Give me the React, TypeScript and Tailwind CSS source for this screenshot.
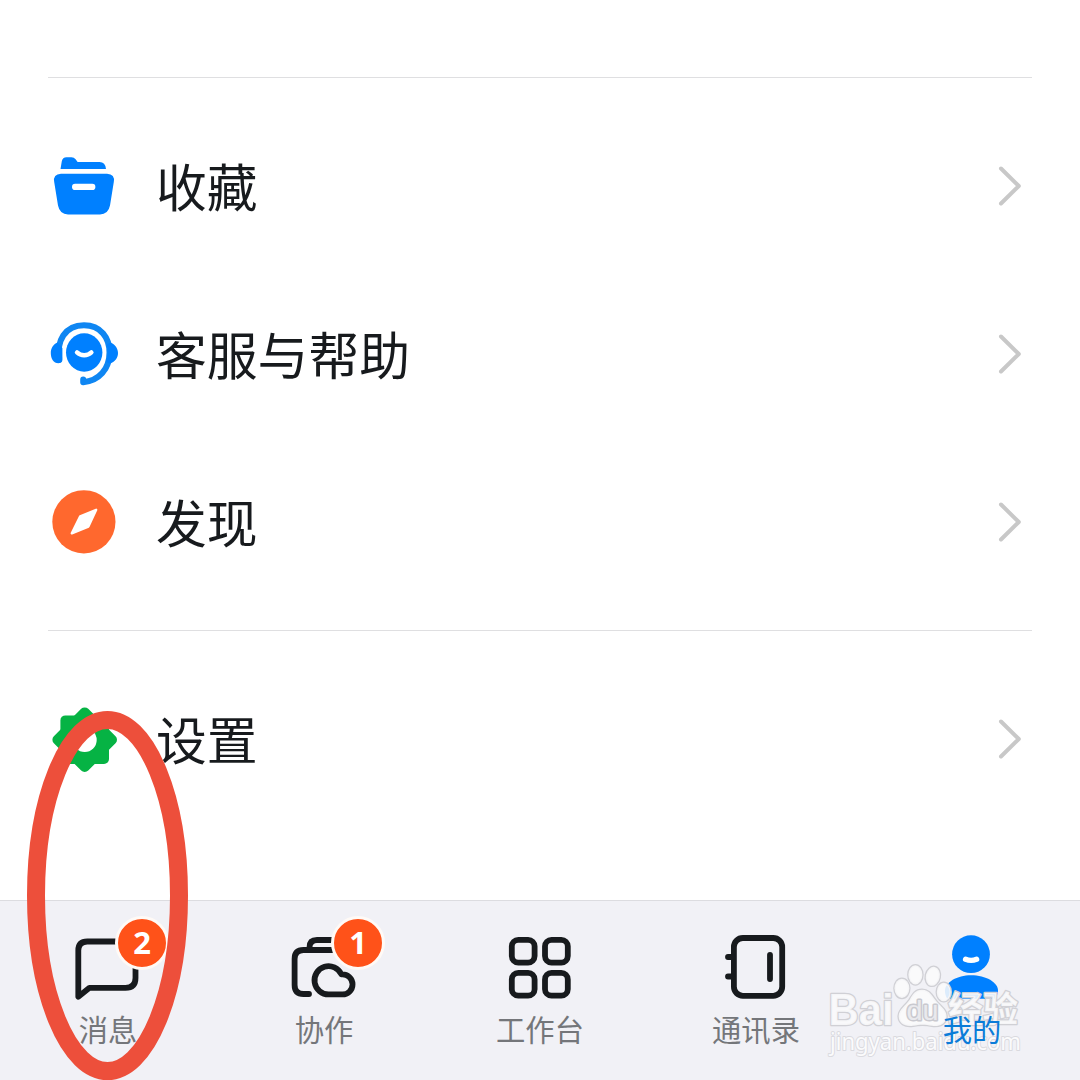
import type { ReactNode } from 'react';

interface MenuItem {
  label: string;
  icon: ReactNode;
}

interface TabItem {
  label: string;
  icon: ReactNode;
  badge?: number;
  active?: boolean;
}

function FavoritesIcon() {
  return (
    <svg className="h-[72px] w-[72px]" viewBox="48 150 72 72" fill="#0080ff">
      <path d="M60.5 169 L61.8 161.2 Q62.6 157.2 66.5 157.2 H71.5 Q74 157.2 75.6 159.2 L77.6 162 H99.5 Q105.4 162 106 169 Z" />
      <path d="M61 173.8 H107 Q115.2 174.3 113.8 182 L110 205.5 Q108.2 214.4 100 214.4 H68 Q59.8 214.4 58 205.5 L54.2 182 Q52.8 174.3 61 173.8 Z" />
      <rect x="72" y="183.8" width="23.4" height="6.2" rx="3.1" fill="#fff" />
    </svg>
  );
}

function SupportIcon() {
  return (
    <svg className="h-[72px] w-[72px]" viewBox="48 318 72 72" fill="#0080ff">
      <ellipse cx="84.2" cy="352.5" rx="18.2" ry="19.2" />
      <path
        d="M59.3 360 C56 341 65 325.3 84 325.3 C101 325.3 109.5 338 109.5 352.5 C109.5 369 99 381 83.2 382.2 V379.5"
        fill="none"
        stroke="#0f86f2"
        strokeWidth="6"
        strokeLinecap="round"
        strokeLinejoin="round"
      />
      <path d="M57.5 342.5 C53 344.5 50.8 348.5 50.8 353 C50.8 358.5 53.5 363.3 58.5 363.3 Q62.5 363 62.4 358 V348 Z" />
      <path d="M110.8 342.5 C115.5 345 118 348.8 118 353 C118 357.5 115.5 361.5 110 363.8 L106.5 362 Q108.6 353 107 344 Z" />
      <path
        d="M77 352.4 C81 356.2 87.4 356.2 91.4 352.4"
        fill="none"
        stroke="#fff"
        strokeWidth="4.4"
        strokeLinecap="round"
      />
    </svg>
  );
}

function DiscoverIcon() {
  return (
    <svg className="h-[72px] w-[72px]" viewBox="48 486 72 72">
      <circle cx="83.9" cy="521.8" r="31.6" fill="#ff682e" />
      <path
        d="M96.2 509.8 L80.2 516.4 L71.8 533.4 L88.4 526.6 Z"
        fill="#fff"
        stroke="#fff"
        strokeWidth="2.4"
        strokeLinejoin="round"
      />
    </svg>
  );
}

function SettingsIcon() {
  return (
    <svg className="h-[72px] w-[72px]" viewBox="48 703 72 72" fill="#06b344">
      <rect x="60.4" y="715.4" width="48.6" height="48.6" rx="5" />
      <rect x="60.4" y="715.4" width="48.6" height="48.6" rx="5" transform="rotate(45 84.7 739.7)" />
      <circle cx="84.7" cy="739.9" r="12" fill="#fff" />
    </svg>
  );
}

function ChevronIcon() {
  return (
    <svg className="h-12 w-12" viewBox="984 162 48 48" fill="none" stroke="#c8c8c8" strokeWidth="4">
      <path d="M1001 168.5 L1018.8 186 L1001 203.5" strokeLinecap="round" strokeLinejoin="round" />
    </svg>
  );
}

function MessageIcon() {
  return (
    <svg className="h-[72px] w-[72px]" viewBox="72 931 72 72" fill="none" stroke="#171a1d" strokeWidth="5.8">
      <path
        d="M78.3 996.8 V950.5 Q78.3 941.5 87.3 941.5 H126.5 Q135.5 941.5 135.5 950.5 V978 Q135.5 987.8 125.5 987.8 H89.5 Z"
        strokeLinejoin="round"
      />
    </svg>
  );
}

function CollabIcon() {
  return (
    <svg className="h-[72px] w-[72px]" viewBox="288 931 72 72" fill="none" stroke="#171a1d" strokeWidth="5.8">
      <path
        d="M309 994 H303.5 Q294.6 994 294.6 985 V959 Q294.6 950 303.5 950 H340"
        strokeLinecap="round"
      />
      <path d="M309.5 950 V947.5 Q309.5 940 317 940 H336" />
      <path
        d="M329 994.4 A14.1 14.1 0 1 1 341.4 974.4 A10.05 10.05 0 1 1 341.6 994.4 Z"
        strokeLinejoin="round"
      />
    </svg>
  );
}

function WorkbenchIcon() {
  return (
    <svg className="h-[72px] w-[72px]" viewBox="504 931 72 72" fill="none" stroke="#171a1d" strokeWidth="5.8">
      <rect x="511.8" y="939.8" width="22.8" height="22.8" rx="6.5" />
      <rect x="545" y="939.8" width="22.8" height="22.8" rx="6.5" />
      <rect x="511.8" y="972.9" width="22.8" height="22.8" rx="6.5" />
      <rect x="545" y="972.9" width="22.8" height="22.8" rx="6.5" />
    </svg>
  );
}

function ContactsIcon() {
  return (
    <svg
      className="h-[72px] w-[72px]"
      viewBox="720 931 72 72"
      fill="none"
      stroke="#171a1d"
      strokeWidth="5.8"
      strokeLinecap="round"
    >
      <rect x="733.9" y="938" width="48.3" height="57.8" rx="9" />
      <path d="M770 954.8 V979 M728 957 H732 M728 976.5 H732" />
    </svg>
  );
}

function ProfileIcon() {
  return (
    <svg className="h-[72px] w-[72px]" viewBox="936 931 72 72" fill="#0080ff">
      <circle cx="971" cy="954.2" r="18.9" />
      <path
        d="M965.6 959.2 C968.5 960.4 973.7 960.4 976.6 959.2"
        fill="none"
        stroke="#fff"
        strokeWidth="5.4"
        strokeLinecap="round"
      />
      <path d="M971 975.3 C986 975.3 998 982.5 998 990.5 Q998 995.5 994.5 998.7 H947.5 Q945 996 945 990.5 C945 982.5 957 975.3 971 975.3 Z" />
    </svg>
  );
}

const mainItems: MenuItem[] = [
  { label: '收藏', icon: <FavoritesIcon /> },
  { label: '客服与帮助', icon: <SupportIcon /> },
  { label: '发现', icon: <DiscoverIcon /> },
];

const tabs: TabItem[] = [
  { label: '消息', icon: <MessageIcon />, badge: 2 },
  { label: '协作', icon: <CollabIcon />, badge: 1 },
  { label: '工作台', icon: <WorkbenchIcon /> },
  { label: '通讯录', icon: <ContactsIcon /> },
  { label: '我的', icon: <ProfileIcon />, active: true },
];

function MenuRow({ label, icon }: MenuItem) {
  return (
    <button className="flex h-[168px] w-full items-center text-left">
      {icon}
      <span className="ml-9 flex-1 pb-[3px] text-[50.8px] leading-[72px] text-[#171a1d]">{label}</span>
      <ChevronIcon />
    </button>
  );
}

function Tab({ label, icon, badge, active }: TabItem) {
  return (
    <button className="flex flex-1 flex-col items-center pt-[30px]">
      <span className="relative">
        {icon}
        {badge && (
          <span className="absolute -top-[15px] left-[43px] flex h-[54px] w-[54px] items-center justify-center rounded-full border-[3px] border-[#fffaf6] bg-[#ff5219] pb-px font-['Noto_Sans'] text-[31px] font-bold text-white">
            {badge}
          </span>
        )}
      </span>
      <span
        className={`mt-[5px] text-[29.3px] leading-[40px] ${active ? 'relative z-10 text-[#0b7cd8]' : 'text-[#74767a]'}`}
      >
        {label}
      </span>
    </button>
  );
}

function Watermark() {
  return (
    <svg
      className="pointer-events-none absolute top-[955px] left-[820px] h-[110px] w-[212px]"
      viewBox="820 955 212 110"
      stroke="#d0d0d5"
      strokeLinejoin="round"
      paintOrder="stroke"
    >
      <g fill="#fbfbfc" fillOpacity="0.88" strokeWidth="2.6">
        <text x="828.5" y="1025" fontFamily="Liberation Sans" fontWeight="700" fontSize="45" textLength="65" lengthAdjust="spacingAndGlyphs">
          Bai
        </text>
        <ellipse cx="901.9" cy="988.3" rx="7.4" ry="9.6" />
        <ellipse cx="915.4" cy="974.8" rx="7" ry="9.6" />
        <ellipse cx="932.8" cy="976.3" rx="7" ry="9.6" transform="rotate(12 932.8 976.3)" />
        <ellipse cx="943.8" cy="992" rx="7" ry="9.2" />
        <path d="M922 989.8 C930 989.8 932.5 997 937 1002 C942 1007.5 947.5 1011 946.4 1018 C945 1024.5 939 1026.8 932 1025.8 C925 1024.3 920 1024.3 913 1025.8 C905 1027 898.5 1023.5 898.7 1016 C899 1009 905.5 1006 909.5 1000 C913 994 915.5 989.8 922 989.8 Z" />
        <text x="948" y="1022" fontFamily="Noto Sans CJK SC" fontWeight="700" fontSize="35" textLength="70">
          经验
        </text>
      </g>
      <text
        x="906.5"
        y="1019.5"
        fontFamily="Liberation Sans"
        fontSize="28"
        textLength="32"
        fill="#e9e9ed"
        stroke="#c9c9cf"
        strokeWidth="3"
        lengthAdjust="spacingAndGlyphs"
      >
        du
      </text>
      <text
        x="830"
        y="1050"
        fontFamily="Noto Sans"
        fontSize="23.5"
        textLength="191"
        lengthAdjust="spacingAndGlyphs"
        fill="#fbfbfc"
        stroke="#dadadf"
        strokeWidth="2"
      >
        jingyan.baidu.com
      </text>
    </svg>
  );
}

export default function App() {
  return (
    <div className="relative flex h-[1080px] w-[1080px] flex-col overflow-hidden bg-white font-['Noto_Sans_CJK_SC',sans-serif]">
      <main className="flex-1 px-12 pt-[77px]">
        <section className="border-t border-[#dfdfe1] pt-6">
          {mainItems.map((item) => (
            <MenuRow key={item.label} {...item} />
          ))}
        </section>
        <section className="mt-6 border-t border-[#dfdfe1] pt-6">
          <MenuRow label="设置" icon={<SettingsIcon />} />
        </section>
      </main>

      <nav className="flex h-[180px] items-start border-t border-[#dcdce0] bg-[#f1f1f6]">
        {tabs.map((tab) => (
          <Tab key={tab.label} {...tab} />
        ))}
      </nav>

      <Watermark />

      {/* Highlight ring around the messages tab */}
      <svg className="pointer-events-none absolute top-[705px] left-5 h-[375px] w-[175px]" viewBox="20 705 175 375">
        <ellipse cx="107.5" cy="895.5" rx="71.5" ry="175.5" fill="none" stroke="#ed4f3b" strokeWidth="18" />
      </svg>
    </div>
  );
}
